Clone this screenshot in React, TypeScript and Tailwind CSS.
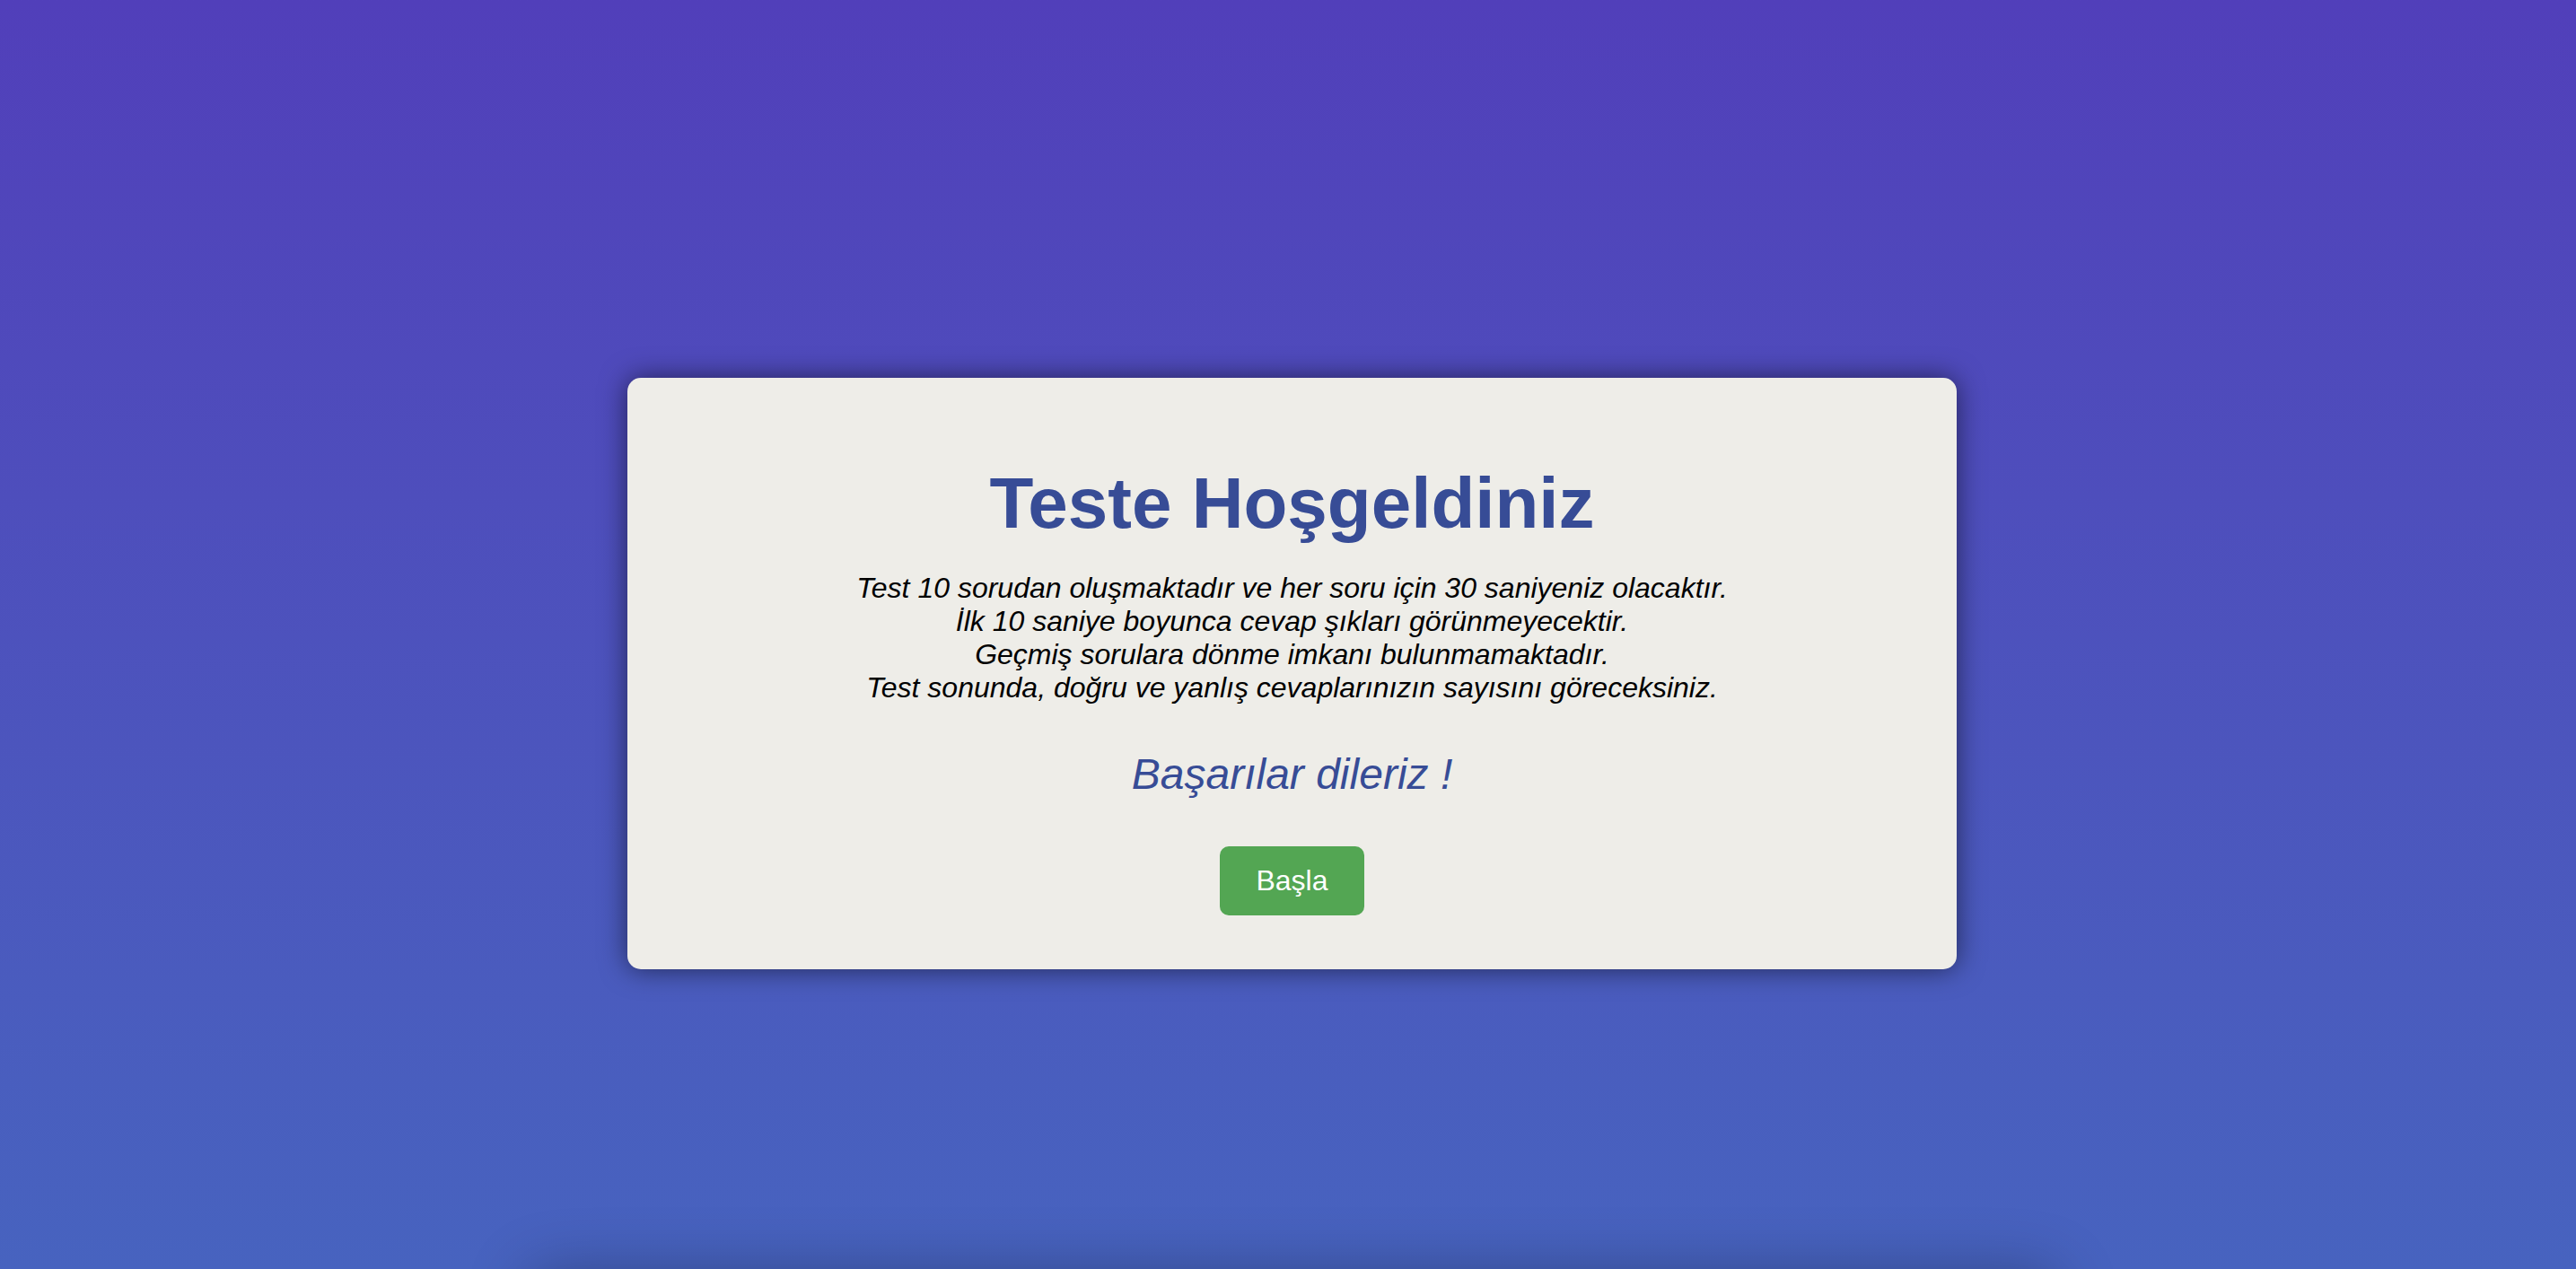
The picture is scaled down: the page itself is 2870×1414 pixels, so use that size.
import React from "react";

export default function App() {
  return (
    <div
      className="relative h-screen w-full overflow-hidden bg-linear-to-b from-[#513fba] to-[#4763bf]"
      style={{ fontFamily: '"Liberation Sans", Arial, sans-serif' }}
    >
      <div className="pt-[421px] pl-[9px]">
        <div className="mx-auto flex w-[1481px] flex-col items-center rounded-[15px] bg-[#eeede8] pt-[94px] pb-[60px] shadow-[0_0_30px_rgba(0,0,0,0.55)]">
          <h1 className="text-[80px] font-bold leading-[92px] text-[#374c96]">
            Teste Hoşgeldiniz
          </h1>
          <p className="mt-[30px] text-center text-[32px] italic leading-[37px] text-black">
            Test 10 sorudan oluşmaktadır ve her soru için 30 saniyeniz olacaktır.
            <br />
            İlk 10 saniye boyunca cevap şıkları görünmeyecektir.
            <br />
            Geçmiş sorulara dönme imkanı bulunmamaktadır.
            <br />
            Test sonunda, doğru ve yanlış cevaplarınızın sayısını göreceksiniz.
          </p>
          <p className="mt-[50px] text-[48px] italic leading-[55px] text-[#374c96]">
            Başarılar dileriz !
          </p>
          <button className="mt-[53px] rounded-[10px] bg-[#53a653] px-[40px] py-[20px] text-[32px] leading-[37px] text-white">
            Başla
          </button>
        </div>
        {/* next panel, sits just under the fold */}
        <div className="mx-auto mt-[339px] h-[400px] w-[1700px] rounded-[15px] bg-[#eeede8] shadow-[0_0_70px_rgba(0,0,0,0.3)]" />
      </div>
    </div>
  );
}
